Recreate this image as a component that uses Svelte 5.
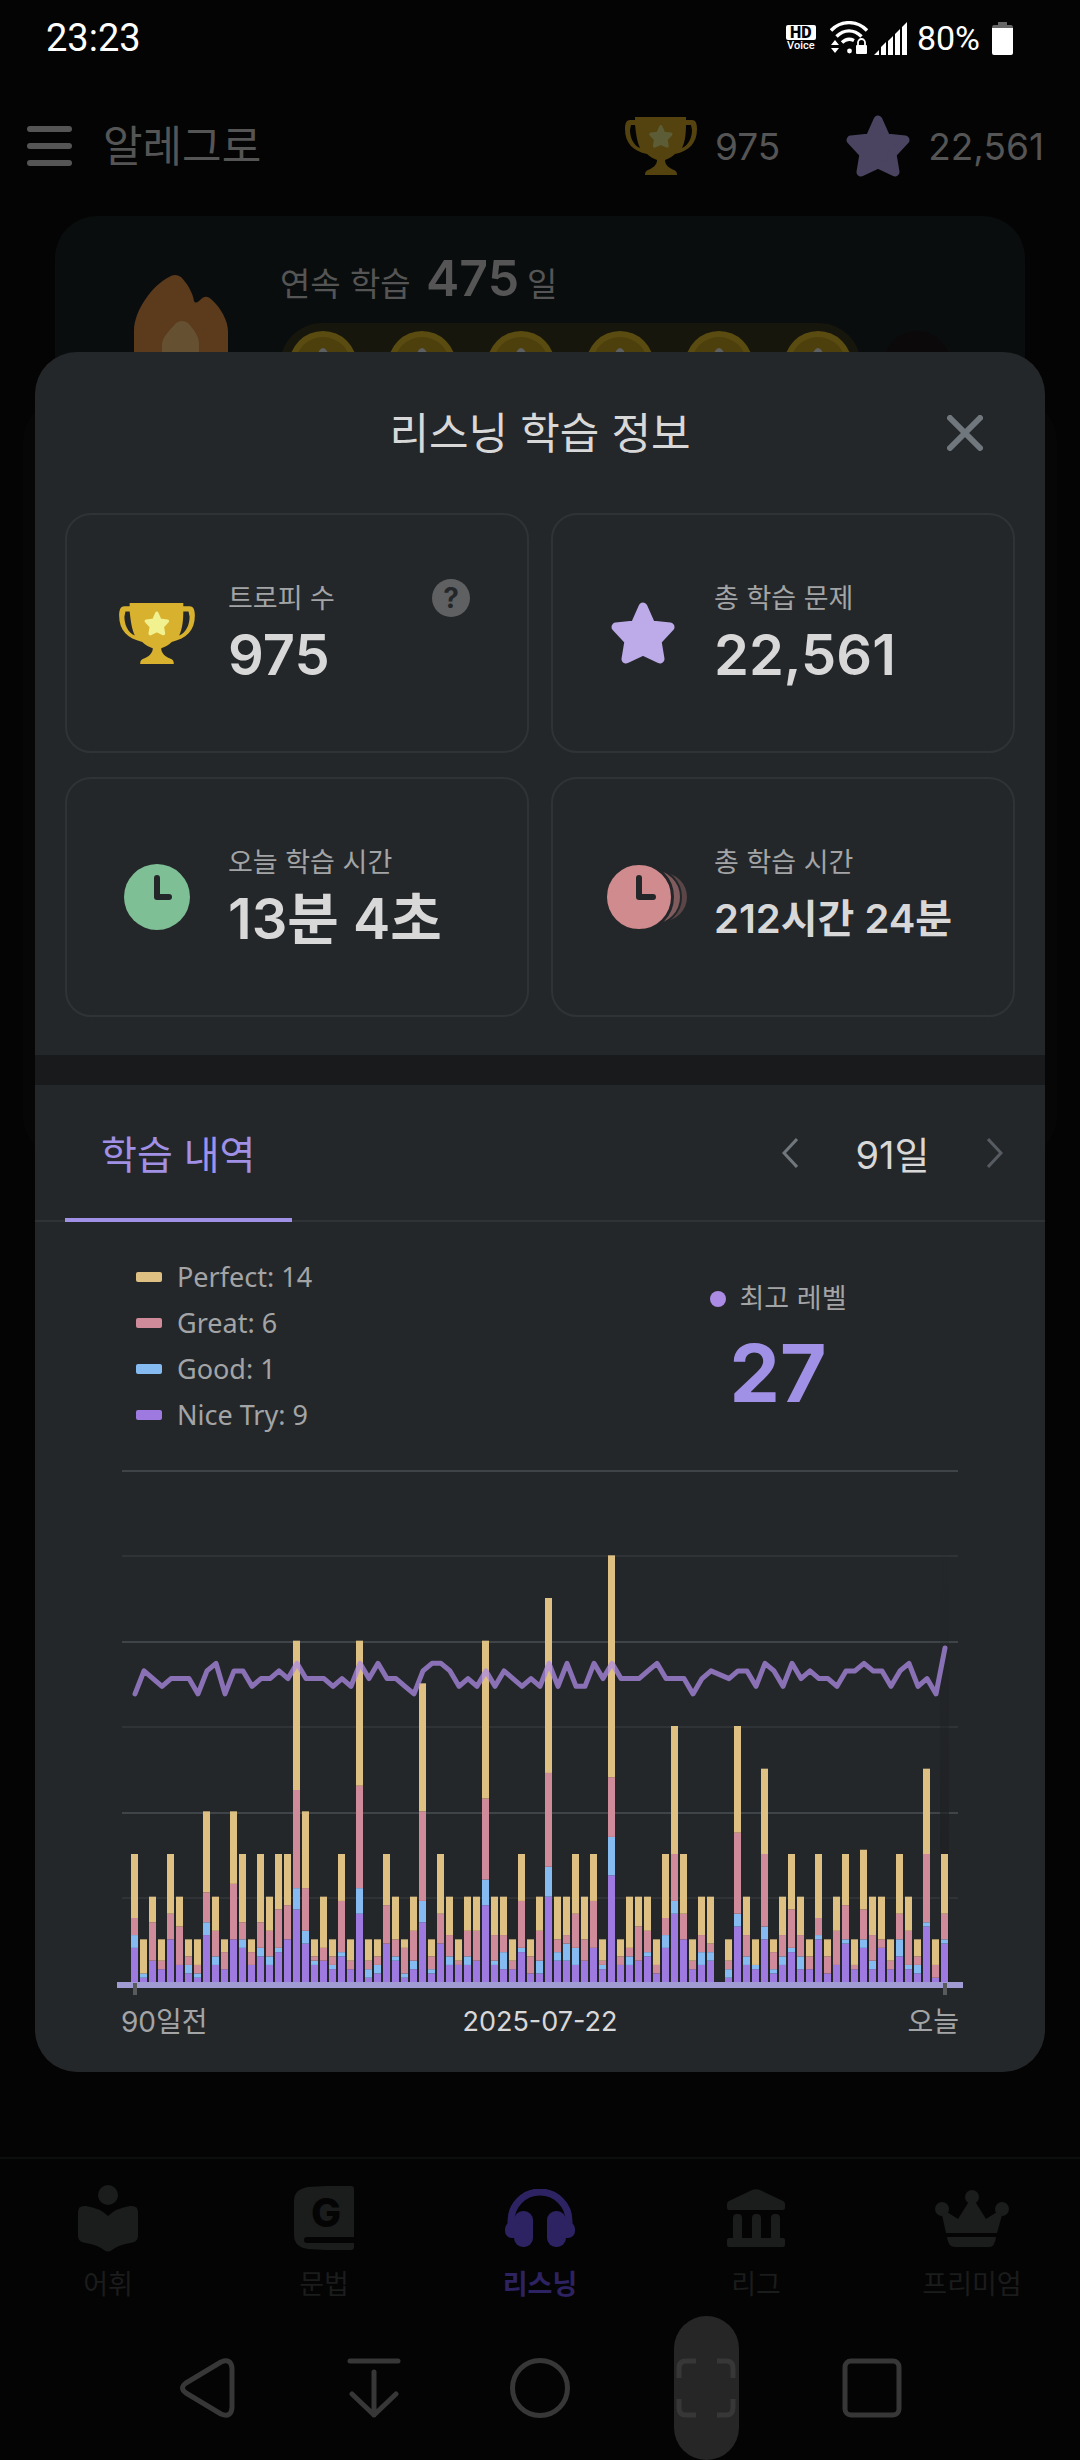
<script>
	const STAR = "M32 5L40 23L59 25L46 39L49 57L32 49L15 57L18 39L5 25L24 23Z";
	const CUP = "M10 0H61V3H67C71 3 72 7 72 12C72 26 64 34 50 37C47 40 43 42 40 43C40 48 44 51 49 53C51 54 52 55 52 58H20C20 55 21 54 23 53C28 51 32 48 32 43C29 42 25 40 22 37C8 34 0 26 0 12C0 7 1 3 5 3H10ZM6 8H10C11 17 12 25 15 31C8 28 5 20 5 13ZM61 8H66L67 13C67 20 64 28 57 31C60 25 61 17 61 8Z";

	let open = true;
	let tab = "리스닝";

	// one row per day: nice try, good, great, perfect
	const days = [
		[8,3,4,15],[1,1,0,8],[5,0,9,6],[3,0,2,5],[10,0,6,14],[4,0,9,7],[2,2,2,4],[1,1,2,6],[11,3,7,19],[4,2,6,8],
		[3,0,4,3],[10,0,13,17],[8,2,4,16],[4,0,3,3],[6,2,6,16],[4,2,6,8],[7,1,9,13],[10,0,8,12],[17,5,23,35],[9,3,10,18],
		[4,1,1,4],[5,0,3,12],[3,1,2,4],[6,1,12,11],[3,0,2,5],[16,6,24,34],[1,2,2,5],[2,2,2,4],[9,0,9,12],[5,1,4,10],
		[1,1,6,2],[3,2,7,8],[14,5,21,30],[2,1,3,4],[9,0,7,14],[4,2,5,9],[4,0,1,5],[4,2,6,8],[5,0,7,8],[18,6,19,37],
		[4,1,6,9],[3,4,4,9],[3,0,2,5],[7,1,11,11],[2,0,4,4],[2,3,7,8],[20,7,22,41],[5,2,3,10],[5,4,2,9],[4,4,8,14],
		[5,0,5,10],[8,0,11,11],[3,1,1,5],[25,9,14,52],[4,0,2,4],[4,2,2,12],[5,0,8,7],[6,1,5,8],[2,0,2,6],[8,3,4,15],
		[16,3,11,30],[10,0,6,14],[3,0,2,5],[4,3,4,9],[5,2,2,11],[0,0,0,0],[1,2,2,5],[13,3,19,25],[4,2,5,9],[3,1,0,6],
		[10,3,17,20],[2,1,4,3],[4,2,5,9],[7,1,9,13],[3,3,5,9],[3,0,3,4],[10,1,4,15],[2,0,4,4],[4,0,8,8],[9,1,8,12],
		[3,0,1,6],[8,2,7,14],[3,2,6,9],[8,0,2,10],[3,0,2,5],[6,4,6,14],[3,1,8,8],[2,2,2,4],[13,1,16,20],[1,0,3,6],
		[9,1,6,14]
	];
	// null: no study on that day
	const levels = [
		21,24,23,22,23,23,23,21,24,25,21,24,24,22,23,23,24,23,25,23,23,23,22,23,22,25,23,25,23,23,
		22,21,24,25,25,24,22,23,22,24,22,24,23,22,23,22,25,22,25,22,22,25,23,25,23,23,23,24,25,23,
		23,23,21,23,24,null,23,24,24,22,25,24,22,25,23,24,23,23,22,24,24,25,24,24,22,24,25,22,23,21,27
	];
	const colors = ["#9e79df", "#85bbf0", "#cf8b99", "#dfc083"];
	const base = 512;
	const unit = base / 120;

	const bars = days.flatMap((day, i) => {
		let sum = 0;
		return day.map((n, k) => {
			sum += n;
			return { x: 14 + i * 9, y: base - sum * unit, h: n * unit, fill: colors[k] };
		});
	}).filter(b => b.h > 0);

	const line = levels
		.map((l, i) => l === null ? null : `${18 + i * 9},${(178 + (27 - l) * 7.65).toFixed(1)}`)
		.filter(p => p)
		.join(" ");

	const legend = [
		{ name: "Perfect", count: 14, kind: "perfect" },
		{ name: "Great", count: 6, kind: "great" },
		{ name: "Good", count: 1, kind: "good" },
		{ name: "Nice Try", count: 9, kind: "nice" }
	];
	const tabs = ["어휘", "문법", "리스닝", "리그", "프리미엄"];
</script>

<div class="screen">
	<div class="status">
		<span class="time">23:23</span>
		<div class="status-icons">
			<span class="volte"><b>HD</b><small>Voice</small></span>
			<svg class="wifi" viewBox="0 0 38 34" width="38" height="34">
				<g fill="none" stroke="#fff" stroke-width="3.4">
					<path d="M1 9.500C11-1 27-1 37 9.500" />
					<path d="M6.500 15.500C14 8 24 8 31.500 15.500" />
					<path d="M12 21.500C15.500 18 20 17.500 24 19.500" />
					<path d="M28 24V21.500a3.500 3.500 0 0 1 7 0V24" stroke-width="1.800" />
				</g>
				<path d="M1 24L5 19L9 24ZM1 27L5 32L9 27Z" fill="#fff" />
				<circle cx="19.500" cy="30" r="2.400" fill="#fff" />
				<rect x="26" y="24" width="11" height="9" rx="1" fill="#fff" />
			</svg>
			<svg class="signal" viewBox="0 0 33 33" width="33" height="33">
				<path d="M0 33L5 28V33ZM7 33V25L12 20V33ZM14 33V19L19 14V33ZM21 33V12L26 7V33ZM28 33V5L33 0V33Z" fill="#fff" />
			</svg>
			<span class="percent">80%</span>
			<svg class="battery" viewBox="0 0 21 33" width="21" height="33">
				<path d="M6 0H15V3H19Q21 3 21 6H0Q0 3 2 3H6Z" fill="#666" />
				<path d="M0 6H21V31Q21 33 19 33H2Q0 33 0 31Z" fill="#fff" />
			</svg>
		</div>
	</div>

	<header>
		<button class="menu" aria-label="메뉴"><i></i><i></i><i></i></button>
		<h1>알레그로</h1>
		<div class="score">
			<svg viewBox="0 0 72 58" width="72" height="58">
				<path d={CUP} fill="#54430f" fill-rule="evenodd" />
				<path d={STAR} class="star" transform="translate(24 8) scale(.37)" fill="#5c5c36" stroke="#5c5c36" />
			</svg>
			<span>975</span>
		</div>
		<div class="score">
			<svg viewBox="0 0 64 62" width="64" height="62">
				<path d={STAR} class="star" fill="#4a4460" stroke="#4a4460" />
			</svg>
			<span>22,561</span>
		</div>
	</header>

	<section class="streak">
		<svg class="flame" viewBox="0 0 94 96" width="94" height="96">
			<path d="M0 56C0 35 19 10 35 2Q41-2 47 2C53 8 59 18 60 26Q61 29 65 26C70 21 73 20 78 25C87 33 94 46 94 56V96H0Z" fill="#5c3a1c" />
			<path d="M28 70C28 62 36 55 42 48Q48 44 54 48C60 55 65 61 65 69V96H28Z" fill="#655132" />
		</svg>
		<div class="streak-info">
			<p>연속 학습 <strong>475</strong>일</p>
			<div class="coins">
				<div class="coins-on">
					{#each [1, 2, 3, 4, 5, 6] as coin (coin)}
						<svg viewBox="0 0 68 68" width="68" height="68">
							<circle cx="34" cy="34" r="34" fill="#5a4b10" />
							<circle cx="34" cy="34" r="28" fill="#4d400d" />
							<path d="M25 40L30 20Q34 14 38 20L43 40Z" fill="#5e5f60" />
						</svg>
					{/each}
				</div>
				<span class="coin-off"></span>
			</div>
		</div>
	</section>
	<div class="panel"></div>

	<nav class="tabs">
		{#each tabs as name, i (name)}
			<button class:active={tab === name} on:click={() => (tab = name)}>
				<span class="tab-icon">
					{#if i === 0}
						<svg viewBox="0 0 60 67" width="60" height="67">
							<circle cx="30" cy="10" r="10" />
							<path d="M0 27Q0 20 8 21Q22 23 30 31Q38 23 52 21Q60 20 60 27V51Q60 57 52 58Q40 60 34 65Q30 68 26 65Q20 60 8 58Q0 57 0 51Z" />
						</svg>
					{:else if i === 1}
						<svg viewBox="0 0 60 64" width="60" height="64">
							<path d="M14 1L32 0H57Q60 0 60 3V51H13a3 3 0 0 0 0 6H60V61Q60 64 57 64H32L14 63Q0 61 0 49V15Q0 3 14 1Z" />
							<text x="32" y="41" text-anchor="middle">G</text>
						</svg>
					{:else if i === 2}
						<svg viewBox="0 0 70 58" width="70" height="58">
							<path d="M6 38V32A29 29 0 0 1 64 32V38" fill="none" stroke="currentColor" stroke-width="7" />
							<rect x="9" y="22" width="19" height="36" rx="9" />
							<rect x="42" y="22" width="19" height="36" rx="9" />
							<rect x="0" y="33" width="18" height="16" rx="7" />
							<rect x="52" y="33" width="18" height="16" rx="7" />
						</svg>
					{:else if i === 3}
						<svg viewBox="0 0 58 58" width="58" height="58">
							<path d="M0 15Q0 13 2 12L24 1.500Q29-1 34 1.500L56 12Q58 13 58 15V19Q58 21 56 21H2Q0 21 0 19Z" />
							<rect x="6" y="25" width="9" height="27" rx="4" />
							<rect x="25" y="25" width="9" height="27" rx="4" />
							<rect x="44" y="25" width="9" height="27" rx="4" />
							<rect x="0" y="49" width="58" height="9" rx="2" />
						</svg>
					{:else}
						<svg viewBox="0 0 74 57" width="74" height="57">
							<circle cx="7" cy="19" r="7" />
							<circle cx="37" cy="7" r="7" />
							<circle cx="67" cy="19" r="7" />
							<path d="M7 25L12 22L23 29L33 13H41L51 29L62 22L67 25L62 43H11Z" />
							<path d="M12 47H61Q60 57 54 57H20Q13 57 12 47Z" />
						</svg>
					{/if}
				</span>
				{name}
			</button>
		{/each}
	</nav>

	<div class="system">
		<button aria-label="뒤로">
			<svg viewBox="0 0 60 60" width="60" height="60"><path d="M8 25L43 4Q53 0 54 10V50Q53 60 43 56L8 35Q1 30 8 25Z" /></svg>
		</button>
		<button aria-label="내리기">
			<svg viewBox="0 0 60 60" width="60" height="60"><path d="M6 3H54M30 14V57M8 36L30 57L52 36" /></svg>
		</button>
		<button aria-label="홈">
			<svg viewBox="0 0 60 60" width="60" height="60"><circle cx="30" cy="30" r="27.500" /></svg>
		</button>
		<button class="pressed" aria-label="캡처">
			<svg viewBox="0 0 60 60" width="60" height="60"><path class="flat" d="M3 20V10Q3 3 10 3H20M41 3H50Q57 3 57 10V20M57 41V50Q57 57 50 57H41M20 57H10Q3 57 3 50V41" /></svg>
		</button>
		<button aria-label="최근 앱">
			<svg viewBox="0 0 60 60" width="60" height="60"><rect x="3" y="3" width="54" height="54" rx="6" /></svg>
		</button>
	</div>

	{#if open}
		<div class="dialog" role="dialog" aria-labelledby="dialog-title">
			<div class="dialog-head">
				<h2 id="dialog-title">리스닝 학습 정보</h2>
				<button class="close" aria-label="닫기" on:click={() => (open = false)}>
					<svg viewBox="0 0 36 36" width="36" height="36"><path d="M3 3L33 33M33 3L3 33" /></svg>
				</button>
			</div>

			<div class="cards">
				<div class="card">
					<div class="icon">
						<svg viewBox="0 0 72 58" width="76" height="61">
							<path d={CUP} fill="#d8b22f" fill-rule="evenodd" />
							<path d={STAR} class="star" transform="translate(24 8) scale(.37)" fill="#f1f18f" stroke="#f1f18f" />
						</svg>
					</div>
					<div class="text">
						<div class="label">트로피 수</div>
						<div class="value">975</div>
					</div>
					<button class="help" aria-label="트로피 도움말">?</button>
				</div>
				<div class="card">
					<div class="icon">
						<svg viewBox="0 0 64 62" width="64" height="62">
							<path d={STAR} class="star" fill="#bcabe8" stroke="#bcabe8" />
						</svg>
					</div>
					<div class="text">
						<div class="label">총 학습 문제</div>
						<div class="value">22,561</div>
					</div>
				</div>
				<div class="card">
					<div class="icon">
						<svg viewBox="0 0 66 66" width="66" height="66">
							<circle cx="33" cy="33" r="33" fill="#7ebf96" />
							<path class="hands" d="M33 14V33H45" />
						</svg>
					</div>
					<div class="text">
						<div class="label">오늘 학습 시간</div>
						<div class="value">13분 4초</div>
					</div>
				</div>
				<div class="card">
					<div class="icon wide">
						<svg viewBox="0 0 82 66" width="82" height="66">
							<circle cx="57" cy="33" r="24" fill="#5a4547" />
							<circle cx="47" cy="33" r="28" fill="#805c5e" stroke="#24272a" stroke-width="2" />
							<circle cx="33" cy="33" r="33.500" fill="#cf8b8d" stroke="#24272a" stroke-width="3" />
							<path class="hands" d="M33 14V33H47" />
						</svg>
					</div>
					<div class="text">
						<div class="label">총 학습 시간</div>
						<div class="value small">212시간 24분</div>
					</div>
				</div>
			</div>

			<div class="band"></div>

			<div class="history-head">
				<button class="history-tab">학습 내역</button>
				<div class="period">
					<button aria-label="이전"><svg viewBox="0 0 16 30" width="16" height="30"><path d="M15 1L2 15L15 29" /></svg></button>
					<span>91일</span>
					<button class="off" aria-label="다음"><svg viewBox="0 0 16 30" width="16" height="30"><path d="M1 1L14 15L1 29" /></svg></button>
				</div>
			</div>

			<div class="summary">
				<ul>
					{#each legend as item (item.name)}
						<li><i class={item.kind}></i>{item.name}: {item.count}</li>
					{/each}
				</ul>
				<div class="level">
					<div class="level-label"><i></i>최고 레벨</div>
					<div class="level-value">27</div>
				</div>
			</div>

			<div class="chart">
				<svg viewBox="0 0 846 525" role="img" aria-label="학습 내역 그래프">
					<defs>
						<linearGradient id="today" x1="0" y1="0" x2="0" y2="1">
							<stop offset="0" stop-color="#1f2124" stop-opacity="0" />
							<stop offset="1" stop-color="#1c1e21" />
						</linearGradient>
					</defs>
					{#each [0, 1, 2, 3, 4, 5] as n (n)}
						<rect x="5" y={Math.round(n * 85.4)} width="836" height="2" fill={n % 2 ? "#303335" : "#3e4447"} />
					{/each}
					<rect x="823" y="64" width="9" height="448" fill="url(#today)" />
					{#each bars as b}
						<rect x={b.x} y={b.y} width="7" height={b.h} fill={b.fill} />
					{/each}
					<polyline points={line} fill="none" stroke="#ac8be4" stroke-opacity=".75" stroke-width="5" stroke-linejoin="round" stroke-linecap="round" />
					<rect x="0" y="512" width="846" height="6" fill="#a09bd2" />
					<rect x="16" y="513" width="4" height="12" fill="#585a5c" />
					<rect x="826" y="513" width="4" height="12" fill="#585a5c" />
				</svg>
				<div class="axis">
					<span>90일전</span>
					<time datetime="2025-07-22">2025-07-22</time>
					<span>오늘</span>
				</div>
			</div>
		</div>
	{/if}
</div>

<style>
	:global(body) {
		margin: 0;
		background: #040404;
	}
	.screen {
		position: relative;
		display: flex;
		flex-direction: column;
		min-height: 100vh;
		overflow: hidden;
		color: #d8d8d9;
		font-family: Inter, "Noto Sans CJK KR", sans-serif;
	}
	svg {
		display: block;
		flex: none;
	}
	button {
		margin: 0;
		padding: 0;
		border: 0;
		background: none;
		color: inherit;
		font: inherit;
		cursor: pointer;
	}
	h1, h2, p, ul {
		margin: 0;
		padding: 0;
		font-weight: 400;
		list-style: none;
	}
	.star {
		stroke-width: 9px;
		stroke-linejoin: round;
	}

	.status {
		display: flex;
		justify-content: space-between;
		align-items: center;
		height: 76px;
		padding: 0 67px 0 46px;
		color: #fff;
		font-family: Roboto, sans-serif;
	}
	.time {
		font-size: 38px;
	}
	.status-icons {
		display: flex;
		align-items: center;
	}
	.volte {
		display: flex;
		flex-direction: column;
		align-items: center;
		margin-right: 14px;
		font-weight: 700;
	}
	.volte b {
		width: 30px;
		border-radius: 2px;
		background: #fff;
		color: #000;
		font-size: 16px;
		line-height: 15px;
		text-align: center;
	}
	.volte small {
		font-size: 11px;
		font-weight: 500;
		line-height: 12px;
	}
	.signal {
		margin: 0 10px 0 6px;
	}
	.percent {
		font-size: 34px;
	}
	.battery {
		margin-left: 12px;
	}

	header {
		display: flex;
		align-items: center;
		height: 140px;
		padding: 0 36px 0 27px;
		color: #555;
	}
	.menu {
		display: flex;
		flex-direction: column;
		gap: 11px;
	}
	.menu i {
		width: 45px;
		height: 6px;
		border-radius: 3px;
		background: #555;
	}
	h1 {
		flex: 1;
		margin-left: 31px;
		font-size: 43px;
		line-height: 60px;
	}
	.score {
		display: flex;
		align-items: center;
		gap: 18px;
		margin-left: 66px;
		font-size: 37px;
	}

	.streak {
		z-index: 1;
		display: flex;
		margin: 0 55px;
		padding: 34px 77px 60px 79px;
		border-radius: 42px;
		background: #0a0d0e;
		color: #555;
	}
	.flame {
		margin-top: 25px;
	}
	.streak-info {
		flex: 1;
		margin-left: 52px;
	}
	.streak-info p {
		font-size: 33px;
		line-height: 56px;
	}
	strong {
		margin: 0 8px 0 6px;
		font-size: 50px;
		font-weight: 600;
	}
	.coins {
		display: flex;
		align-items: center;
		margin-top: 11px;
	}
	.coins-on {
		display: flex;
		gap: 31px;
		padding: 8px 9px;
		border-radius: 42px;
		background: #16160d;
	}
	.coin-off {
		width: 68px;
		height: 68px;
		margin-left: 22px;
		border-radius: 50%;
		background: #0b0909;
	}
	.panel {
		flex: 1;
		max-height: 760px;
		margin: -68px 23px 0;
		border-radius: 42px;
		background: #060606;
	}

	.tabs {
		display: grid;
		grid-template-columns: repeat(5, 1fr);
		margin-top: auto;
		padding: 24px 0 15px;
		border-top: 2px solid #0c0e0e;
	}
	.tabs button {
		display: flex;
		flex-direction: column;
		align-items: center;
		gap: 16px;
		color: #1b1c1c;
		font-size: 27px;
		line-height: 32px;
	}
	.tabs .active {
		color: #2d2363;
		font-weight: 700;
	}
	.tab-icon {
		display: flex;
		align-items: center;
		height: 70px;
	}
	.tab-icon svg {
		fill: currentColor;
	}
	.tab-icon text {
		fill: #040404;
		font-size: 40px;
		font-weight: 800;
	}
	.system {
		display: grid;
		grid-template-columns: repeat(5, 166px);
		justify-content: center;
	}
	.system button {
		display: flex;
		align-items: center;
		justify-content: center;
		justify-self: center;
		width: 65px;
		height: 144px;
		border-radius: 33px;
	}
	.system .pressed {
		background: #262626;
	}
	.system svg {
		fill: none;
		stroke: #373737;
		stroke-width: 5px;
		stroke-linecap: round;
		stroke-linejoin: round;
	}
	.system .flat {
		stroke-linecap: butt;
	}

	.dialog {
		position: absolute;
		z-index: 2;
		top: 352px;
		left: 35px;
		right: 35px;
		overflow: hidden;
		border-radius: 42px;
		background: #24272a;
	}
	.dialog-head {
		display: grid;
		grid-template-columns: 1fr auto 1fr;
		align-items: center;
		height: 161px;
		padding: 0 62px;
	}
	h2 {
		grid-column: 2;
		font-size: 43px;
		line-height: 60px;
	}
	.close {
		justify-self: end;
	}
	.close path {
		fill: none;
		stroke: #70777d;
		stroke-width: 6px;
		stroke-linecap: round;
	}
	.cards {
		display: grid;
		grid-template-columns: 1fr 1fr;
		gap: 24px 22px;
		padding: 0 30px 38px;
	}
	.card {
		display: flex;
		align-items: center;
		height: 236px;
		border: 2px solid #303336;
		border-radius: 26px;
	}
	.icon {
		display: flex;
		justify-content: center;
		width: 106px;
		margin: 0 18px 0 37px;
	}
	.icon.wide {
		margin: 0 14px 0 41px;
	}
	.hands {
		fill: none;
		stroke: #24272a;
		stroke-width: 6px;
		stroke-linecap: round;
		stroke-linejoin: round;
	}
	.label {
		color: #a3a4a6;
		font-size: 27px;
		line-height: 44px;
	}
	.value {
		font-size: 56px;
		font-weight: 600;
		line-height: 68px;
		white-space: nowrap;
	}
	.value.small {
		font-size: 40px;
	}
	.help {
		align-self: flex-start;
		width: 38px;
		height: 38px;
		margin: 64px 57px 0 auto;
		border-radius: 50%;
		background: #5f6061;
		color: #24272a;
		font-size: 28px;
		font-weight: 700;
		line-height: 38px;
	}
	.band {
		height: 30px;
		background: #191a1c;
	}

	.history-head {
		display: flex;
		justify-content: space-between;
		height: 135px;
		padding: 0 42px 0 30px;
		border-bottom: 2px solid #303336;
	}
	.history-tab {
		height: 137px;
		padding: 0 36px;
		border-bottom: 4px solid #a090e6;
		color: #a090e6;
		font-size: 39px;
	}
	.period {
		display: flex;
		align-items: center;
		justify-content: space-between;
		width: 221px;
		font-size: 38px;
	}
	.period path {
		fill: none;
		stroke: #70777d;
		stroke-width: 3px;
	}
	.period .off path {
		stroke: #565c61;
	}

	.summary {
		display: grid;
		grid-template-columns: 1fr 1fr;
		padding: 32px 53px 32px 101px;
	}
	li {
		display: flex;
		align-items: center;
		gap: 15px;
		color: #a3a4a6;
		font-family: "Noto Sans", sans-serif;
		font-size: 27px;
		line-height: 46px;
	}
	li i {
		width: 26px;
		height: 10px;
		border-radius: 2px;
	}
	.perfect {
		background: #dfc083;
	}
	.great {
		background: #cf8b99;
	}
	.good {
		background: #85bbf0;
	}
	.nice {
		background: #9e79df;
	}
	.level {
		padding-top: 25px;
		text-align: center;
	}
	.level-label {
		display: flex;
		align-items: center;
		justify-content: center;
		gap: 14px;
		color: #a3a4a6;
		font-size: 27px;
		line-height: 40px;
	}
	.level-label i {
		width: 16px;
		height: 16px;
		border-radius: 50%;
		background: #ac8be4;
	}
	.level-value {
		color: #a090e6;
		font-size: 80px;
		font-weight: 700;
		line-height: 108px;
	}

	.chart {
		padding: 0 82px 30px;
	}
	.chart svg {
		width: 100%;
	}
	.axis {
		display: grid;
		grid-template-columns: 1fr auto 1fr;
		align-items: center;
		margin-top: 7px;
		padding: 0 4px;
		color: #a3a4a6;
		font-size: 28px;
		line-height: 40px;
	}
	.axis time {
		color: #d8d8d9;
		font-size: 27px;
	}
	.axis span:last-child {
		text-align: right;
	}
</style>
